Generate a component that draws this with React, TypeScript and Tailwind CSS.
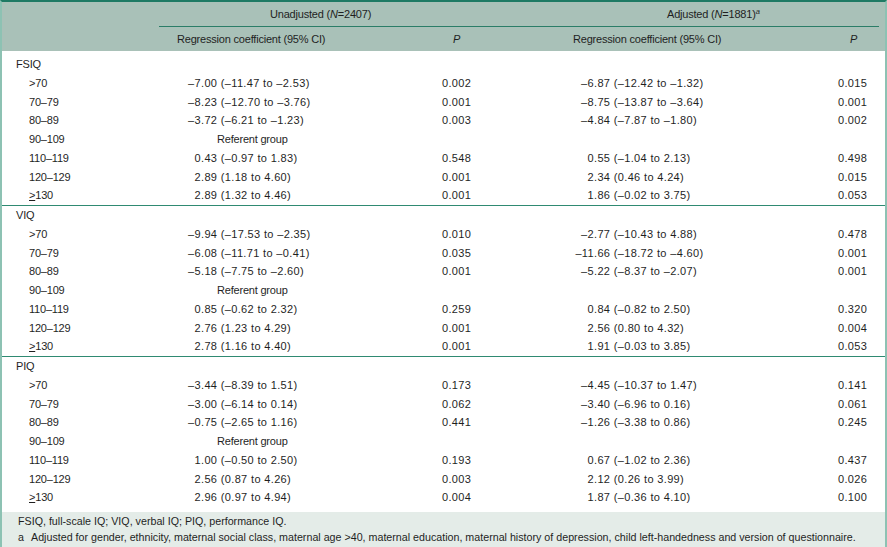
import React from "react";

type Row = { label: string; a?: string; pa?: string; b?: string; pb?: string; ref?: boolean };
type Section = { title: string; rows: Row[] };

const sections: Section[] = [
  {
    title: "FSIQ",
    rows: [
      { label: ">70", a: "–7.00 (–11.47 to –2.53)", pa: "0.002", b: "–6.87 (–12.42 to –1.32)", pb: "0.015" },
      { label: "70–79", a: "–8.23 (–12.70 to –3.76)", pa: "0.001", b: "–8.75 (–13.87 to –3.64)", pb: "0.001" },
      { label: "80–89", a: "–3.72 (–6.21 to –1.23)", pa: "0.003", b: "–4.84 (–7.87 to –1.80)", pb: "0.002" },
      { label: "90–109", ref: true },
      { label: "110–119", a: "0.43 (–0.97 to 1.83)", pa: "0.548", b: "0.55 (–1.04 to 2.13)", pb: "0.498" },
      { label: "120–129", a: "2.89 (1.18 to 4.60)", pa: "0.001", b: "2.34 (0.46 to 4.24)", pb: "0.015" },
      { label: "≥130", a: "2.89 (1.32 to 4.46)", pa: "0.001", b: "1.86 (–0.02 to 3.75)", pb: "0.053" },
    ],
  },
  {
    title: "VIQ",
    rows: [
      { label: ">70", a: "–9.94 (–17.53 to –2.35)", pa: "0.010", b: "–2.77 (–10.43 to 4.88)", pb: "0.478" },
      { label: "70–79", a: "–6.08 (–11.71 to –0.41)", pa: "0.035", b: "–11.66 (–18.72 to –4.60)", pb: "0.001" },
      { label: "80–89", a: "–5.18 (–7.75 to –2.60)", pa: "0.001", b: "–5.22 (–8.37 to –2.07)", pb: "0.001" },
      { label: "90–109", ref: true },
      { label: "110–119", a: "0.85 (–0.62 to 2.32)", pa: "0.259", b: "0.84 (–0.82 to 2.50)", pb: "0.320" },
      { label: "120–129", a: "2.76 (1.23 to 4.29)", pa: "0.001", b: "2.56 (0.80 to 4.32)", pb: "0.004" },
      { label: "≥130", a: "2.78 (1.16 to 4.40)", pa: "0.001", b: "1.91 (–0.03 to 3.85)", pb: "0.053" },
    ],
  },
  {
    title: "PIQ",
    rows: [
      { label: ">70", a: "–3.44 (–8.39 to 1.51)", pa: "0.173", b: "–4.45 (–10.37 to 1.47)", pb: "0.141" },
      { label: "70–79", a: "–3.00 (–6.14 to 0.14)", pa: "0.062", b: "–3.40 (–6.96 to 0.16)", pb: "0.061" },
      { label: "80–89", a: "–0.75 (–2.65 to 1.16)", pa: "0.441", b: "–1.26 (–3.38 to 0.86)", pb: "0.245" },
      { label: "90–109", ref: true },
      { label: "110–119", a: "1.00 (–0.50 to 2.50)", pa: "0.193", b: "0.67 (–1.02 to 2.36)", pb: "0.437" },
      { label: "120–129", a: "2.56 (0.87 to 4.26)", pa: "0.003", b: "2.12 (0.26 to 3.99)", pb: "0.026" },
      { label: "≥130", a: "2.96 (0.97 to 4.94)", pa: "0.004", b: "1.87 (–0.36 to 4.10)", pb: "0.100" },
    ],
  },
];

const grid = "grid grid-cols-[157px_261px_69px_311px_1fr]";

function Dec({ v, left }: { v: string; left: "a" | "b" }) {
  const i = v.indexOf(".");
  const head = v.slice(0, i);
  const tail = v.slice(i);
  return (
    <div className="flex whitespace-nowrap tracking-[0.35px]">
      <span className={left === "a" ? "w-[42px] text-right" : "w-[105px] text-right"}>{head}</span>
      <span>{tail}</span>
    </div>
  );
}

function Label({ text }: { text: string }) {
  if (text.startsWith("≥")) {
    return (
      <span>
        <span className="underline underline-offset-[1px]">&gt;</span>
        {text.slice(1)}
      </span>
    );
  }
  return <span>{text}</span>;
}

export default function App() {
  return (
    <div className="w-[887px] h-[547px] overflow-hidden bg-white text-[11px] tracking-[-0.2px] text-[#1f1f1f] font-['Liberation_Sans',Arial,sans-serif] border-t-2 border-t-[#1e7a64] border-x-2 border-x-[#8dc2b3] flex flex-col">
      {/* header */}
      <div className="bg-[#a9c1b8]">
        <div className="flex h-[25px]">
          <div className="w-[157px]" />
          <div className="flex-1 mr-[6px] border-b border-[#2b7d67] flex items-center">
            <div className="w-[330px] pl-[111px] whitespace-nowrap">
              Unadjusted (<i>N</i>=2407)
            </div>
            <div className="pl-[178px] whitespace-nowrap">
              Adjusted (<i>N</i>=1881)<sup className="text-[7.5px] italic">a</sup>
            </div>
          </div>
        </div>
        <div className={`${grid} h-[24px] items-center`}>
          <div />
          <div className="pl-[18px] whitespace-nowrap">Regression coefficient (95% CI)</div>
          <div className="pl-[33px] italic">P</div>
          <div className="pl-[84px] whitespace-nowrap">Regression coefficient (95% CI)</div>
          <div className="pl-[50px] italic">P</div>
        </div>
      </div>

      {/* body */}
      {sections.map((s, si) => (
        <div
          key={s.title}
          className={
            si === 0
              ? "pt-[4px] border-b border-[#2f8a72]"
              : si === 1
              ? "border-b border-[#2f8a72]"
              : "pb-[5px]"
          }
        >
          <div className={`${grid} h-[18.75px] items-center`}>
            <div className="pl-[14px]">{s.title}</div>
          </div>
          {s.rows.map((r) => (
            <div key={r.label} className={`${grid} h-[18.75px] items-center`}>
              <div className="pl-[27px]">
                <Label text={r.label} />
              </div>
              {r.ref ? (
                <div className="pl-[58px] whitespace-nowrap">Referent group</div>
              ) : (
                <Dec v={r.a!} left="a" />
              )}
              <div className="pl-[22px] tracking-[0.35px]">{r.pa}</div>
              {r.ref ? <div /> : <Dec v={r.b!} left="b" />}
              <div className="pl-[38px] tracking-[0.35px]">{r.pb}</div>
            </div>
          ))}
        </div>
      ))}

      {/* footer */}
      <div className="flex-1 bg-[#e4ece8] pt-[1px] pl-[16px] text-[10.7px] leading-[16px] tracking-normal">
        <div>FSIQ, full-scale IQ; VIQ, verbal IQ; PIQ, performance IQ.</div>
        <div className="flex whitespace-nowrap">
          <span className="w-[13px]">a</span>
          <span>
            Adjusted for gender, ethnicity, maternal social class, maternal age &gt;40, maternal education, maternal
            history of depression, child left-handedness and version of questionnaire.
          </span>
        </div>
      </div>
    </div>
  );
}
